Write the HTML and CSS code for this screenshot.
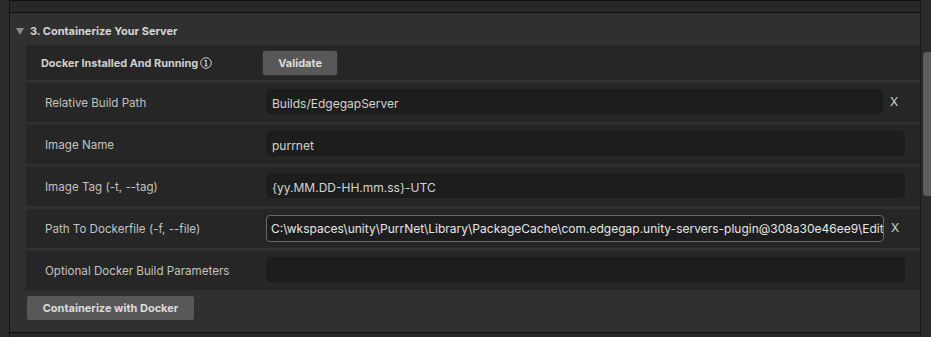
FILE: index.html
```html
<!DOCTYPE html>
<html lang="en">
<head>
    <meta charset="UTF-8">
    <title>Containerize Your Server</title>
    <link rel="stylesheet" href="styles.css">
</head>
<body>
    <div class="window">
        <div class="gutter"></div>
        <div class="content">
            <div class="top-band"></div>
            <div class="section">
                <div class="section-header">
                    <span class="foldout"></span>
                    <span class="section-title">3. Containerize Your Server</span>
                </div>

                <div class="row row-docker">
                    <span class="label-bold">Docker Installed And Running</span>
                    <svg class="info-icon" width="12" height="12" viewBox="0 0 12 12">
                        <circle cx="6" cy="6" r="5.3" fill="none" stroke="#d0d0d0" stroke-width="1"/>
                        <rect x="5.4" y="3" width="1.2" height="6" fill="#d0d0d0"/>
                        <rect x="4.4" y="3" width="2.2" height="1" fill="#d0d0d0"/>
                        <rect x="4.4" y="8.2" width="3.2" height="1" fill="#d0d0d0"/>
                    </svg>
                    <button class="btn btn-validate">Validate</button>
                </div>

                <div class="row">
                    <span class="label">Relative Build Path</span>
                    <div class="field field-short">Builds/EdgegapServer</div>
                    <span class="clear">X</span>
                </div>

                <div class="row">
                    <span class="label">Image Name</span>
                    <div class="field">purrnet</div>
                </div>

                <div class="row">
                    <span class="label">Image Tag (-t, --tag)</span>
                    <div class="field">{yy.MM.DD-HH.mm.ss}-UTC</div>
                </div>

                <div class="row">
                    <span class="label">Path To Dockerfile (-f, --file)</span>
                    <div class="field field-short field-focus">C:\wkspaces\unity\PurrNet\Library\PackageCache\com.edgegap.unity-servers-plugin@308a30e46ee9\Editor\Edgegap\Dockerfile</div>
                    <span class="clear">X</span>
                </div>

                <div class="row">
                    <span class="label">Optional Docker Build Parameters</span>
                    <div class="field"></div>
                </div>

                <button class="btn btn-containerize">Containerize with Docker</button>
            </div>
            <div class="bottom-band"></div>
        </div>
        <div class="scrollbar">
            <div class="scroll-thumb"></div>
        </div>
    </div>
</body>
</html>
```

FILE: styles.css
```css
body {
    margin: 0;
    padding: 0;
    background-color: #292929;
    font-family: Inter, "Noto Sans", sans-serif;
    overflow: hidden;
}
.window {
    display: flex;
    width: 931px;
    height: 337px;
}
.gutter {
    width: 9px;
    background: #2a2a2a;
    border-right: 1px solid #151515;
}
.content {
    flex: 1;
    display: flex;
    flex-direction: column;
    border-right: 1px solid #1c1c1c;
}
.top-band {
    height: 11px;
    background: #282828;
    border-top: 1px solid #111;
    border-bottom: 1px solid #111;
}
.section {
    height: 319px;
    background: #303030;
    box-sizing: border-box;
    padding-left: 16px;
}
.bottom-band {
    flex: 1;
    background: #282828;
    border-top: 1px solid #111;
}
.section-header {
    height: 32px;
    display: flex;
    align-items: center;
    margin-left: -16px;
    padding-top: 4px;
    box-sizing: border-box;
}
.foldout {
    width: 0;
    height: 0;
    margin-left: 6px;
    margin-right: 6px;
    border-left: 4px solid transparent;
    border-right: 4px solid transparent;
    border-top: 7px solid #8a8a8a;
}
.section-title {
    font-size: 11px;
    font-weight: bold;
    color: #d6d6d6;
}
.row {
    display: flex;
    align-items: flex-start;
    height: 39px;
    margin-bottom: 3px;
    background: #262626;
    box-sizing: border-box;
    padding-top: 6px;
}
.row-docker {
    height: 35px;
    padding-top: 4px;
    align-items: center;
    padding-bottom: 4px;
}
.label-bold {
    margin-left: 15px;
    font-size: 10.9px;
    font-weight: bold;
    color: #d0d0d0;
}
.info-icon {
    margin-left: 2px;
}
.label {
    width: 222px;
    margin-left: 19px;
    height: 25px;
    line-height: 29px;
    font-size: 11.6px;
    color: #c2c2c2;
}
.field {
    width: 638px;
    height: 25px;
    line-height: 25px;
    box-sizing: border-box;
    padding: 1px 4px 0;
    background: #1d1d1d;
    border: 1px solid #1b1b1b;
    border-radius: 4px;
    font-size: 12px;
    color: #d4d4d4;
    white-space: nowrap;
    overflow: hidden;
}
.field-short {
    width: 616px;
}
.field-focus {
    margin-left: -1px;
    width: 618px;
    height: 27px;
    line-height: 24px;
    border-color: #6a6a6a;
    color: #e6e6e6;
}
.clear {
    width: 22px;
    text-align: center;
    height: 25px;
    line-height: 25px;
    font-size: 12px;
    color: #cfcfcf;
}
.btn {
    height: 26px;
    box-sizing: border-box;
    background: #585858;
    border: 1px solid #2e2e2e;
    border-radius: 3px;
    font-family: Inter, "Noto Sans", sans-serif;
    font-size: 11px;
    font-weight: bold;
    color: #dcdcdc;
    padding: 0;
}
.btn-validate {
    width: 76px;
    margin-left: 50px;
}
.btn-containerize {
    width: 169px;
    height: 26px;
    margin-top: 2px;
    margin-left: 0;
}
.scrollbar {
    width: 10px;
    background: #2b2b2b;
    position: relative;
}
.scroll-thumb {
    position: absolute;
    top: 52px;
    left: 2px;
    right: 0;
    height: 144px;
    background: #5e5e5e;
    border-radius: 4px 0 0 4px;
}
```
